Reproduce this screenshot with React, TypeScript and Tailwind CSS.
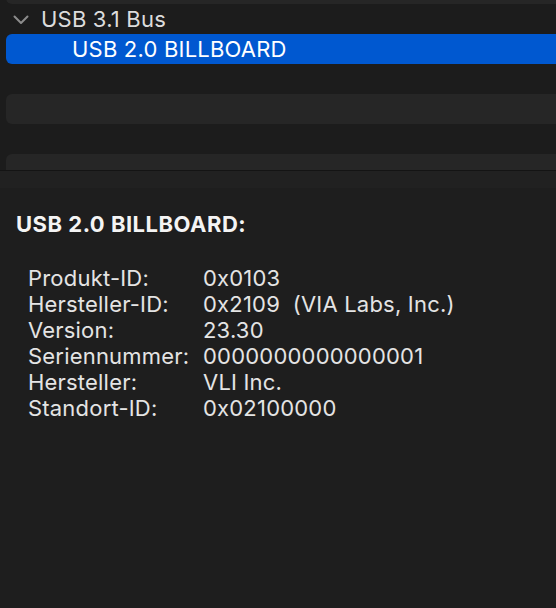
const rows: [string, string][] = [
  ["Produkt-ID:", "0x0103"],
  ["Hersteller-ID:", "0x2109  (VIA Labs, Inc.)"],
  ["Version:", "23.30"],
  ["Seriennummer:", "0000000000000001"],
  ["Hersteller:", "VLI Inc."],
  ["Standort-ID:", "0x02100000"],
];

export default function App() {
  return (
    <div className="w-[556px] h-[608px] overflow-hidden bg-[#1e1e1e] flex flex-col font-['Inter',sans-serif] text-[22px] tracking-[0.2px]">
      {/* tree list */}
      <div className="h-[170px] shrink-0 overflow-hidden bg-[#1c1c1c]">
        <div className="-mt-[26px] flex flex-col">
          <div className="h-[30px] ml-[6px] rounded-l-[6px] bg-[#262626]" />
          <div className="h-[30px] flex items-center text-[#dcdcdc] leading-none">
            <svg width="16" height="10" viewBox="0 0 16 10" className="ml-[13px] mr-[12px] mt-[1px]">
              <polyline points="1.5,1.5 8,8 14.5,1.5" fill="none" stroke="#8c8c8c" strokeWidth="2" strokeLinecap="round" strokeLinejoin="round" />
            </svg>
            <span>USB 3.1 Bus</span>
          </div>
          <div className="h-[30px] ml-[6px] rounded-l-[6px] bg-[#0058d0] flex items-center pl-[66px] text-white leading-none">
            USB 2.0 BILLBOARD
          </div>
          <div className="h-[30px]" />
          <div className="h-[30px] ml-[6px] rounded-l-[6px] bg-[#262626]" />
          <div className="h-[30px]" />
          <div className="h-[30px] ml-[6px] rounded-l-[6px] bg-[#262626]" />
        </div>
      </div>
      <div className="h-px shrink-0 bg-[#141414]" />
      <div className="h-[17px] shrink-0 bg-[#212121]" />

      {/* details */}
      <div className="flex-1 pt-[23px] pl-[16px] text-[#e4e4e4] leading-[26px]">
        <div className="font-bold tracking-[0.5px] text-[#f4f4f4]">USB 2.0 BILLBOARD:</div>
        <div className="mt-[28px] pl-[12px] grid grid-cols-[175px_1fr]">
          {rows.map(([k, v]) => (
            <div key={k} className="contents">
              <span>{k}</span>
              <span className="whitespace-pre">{v}</span>
            </div>
          ))}
        </div>
      </div>
    </div>
  );
}
